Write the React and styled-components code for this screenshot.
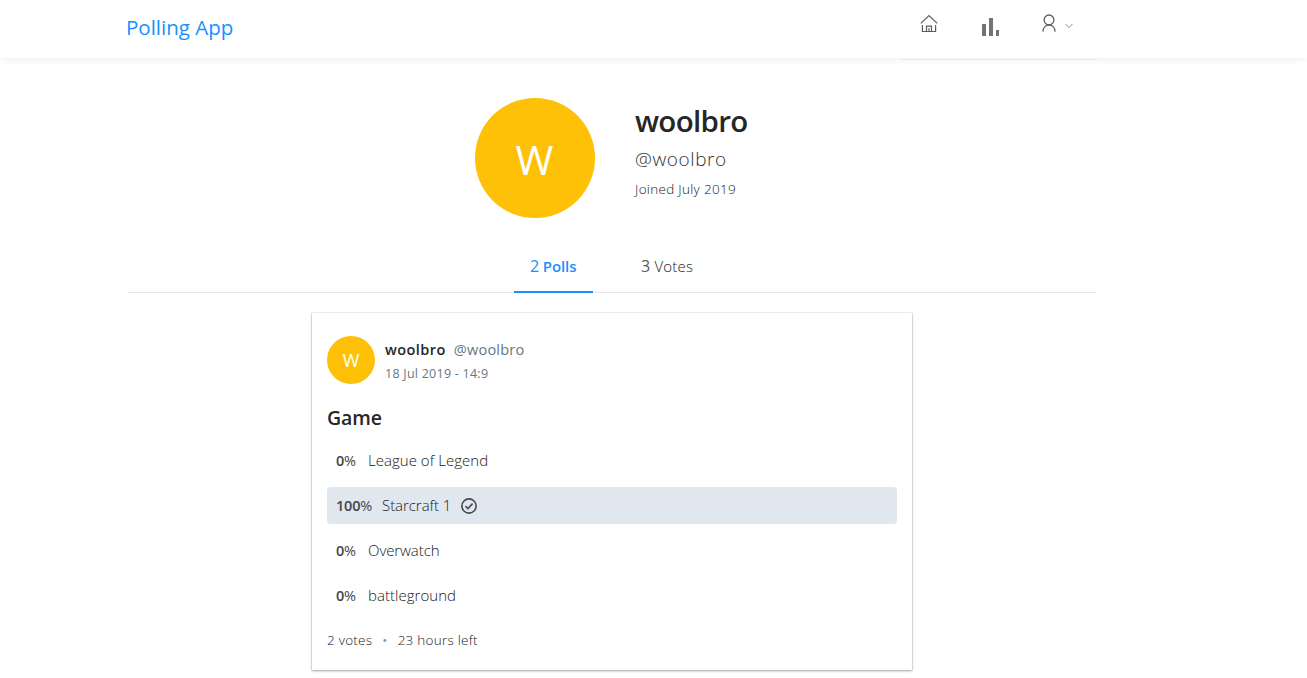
import React from "react";
import styled, { createGlobalStyle } from "styled-components";

const choices = [
  { text: "League of Legend", percent: 0, spacing: "0.03px" },
  { text: "Starcraft 1", percent: 100, selected: true, spacing: "-0.05px" },
  { text: "Overwatch", percent: 0, spacing: "-0.08px" },
  { text: "battleground", percent: 0, spacing: "0.04px" },
];

const HomeIcon = () => (
  <svg width="18" height="18" viewBox="0 0 18 18" fill="none" stroke="#5d5d5d" strokeWidth="1.2">
    <path d="M.8 8.4 9 .6 17.2 8.4" />
    <path d="M2.4 10v6.5h13.2V10" />
    <path d="M6.5 16.5v-5.4h5v5.4M9 13.3v3.2" />
  </svg>
);

const PollIcon = () => (
  <svg width="18" height="18" viewBox="0 0 18 18" fill="#737373">
    <path d="M0 6h4v12H0zM7 0h4v18H7zM14 12h3v6h-3z" />
  </svg>
);

const UserIcon = () => (
  <svg width="14" height="18" viewBox="0 0 14 18" fill="none" stroke="#5d5d5d" strokeWidth="1.3">
    <circle cx="7" cy="5.9" r="4.9" />
    <path d="M.9 17.6c.2-3.9 2.6-6.6 6.1-6.6s5.9 2.7 6.1 6.6" />
  </svg>
);

const DownIcon = () => (
  <svg width="8" height="6" viewBox="0 0 8 6" fill="none" stroke="#8c8c8c">
    <path d="M.4.8 4 4.6 7.6.8" />
  </svg>
);

const CheckIcon = () => (
  <svg width="16" height="16" viewBox="0 0 16 16" fill="none" stroke="#454a4f" strokeWidth="1.6">
    <circle cx="8" cy="8" r="7.1" />
    <path d="m4.5 8.2 2.4 2.3 4.7-4.9" />
  </svg>
);

const App = () => {
  return (
    <>
      <GlobalStyle />
      <Header>
        <HeaderInner>
          <Title>Polling App</Title>
          <Menu>
            <MenuItem $top={15}>
              <HomeIcon />
            </MenuItem>
            <MenuItem $top={18}>
              <PollIcon />
            </MenuItem>
            <MenuItem $top={14}>
              <UserIcon />
              <DownIcon />
            </MenuItem>
          </Menu>
        </HeaderInner>
      </Header>
      <Content>
        <Profile>
          <Avatar $size={120} $font={41}>
            W
          </Avatar>
          <Summary>
            <FullName>woolbro</FullName>
            <UserName>@woolbro</UserName>
            <Joined>Joined July 2019</Joined>
          </Summary>
        </Profile>
        <Tabs>
          <Tab $active>
            <Count $active>2</Count> Polls
          </Tab>
          <Tab>
            <Count>3</Count> Votes
          </Tab>
        </Tabs>
        <Card>
          <Creator>
            <Avatar $size={48} $font={18}>
              W
            </Avatar>
            <CreatorInfo>
              <CreatorLine>
                <CreatorName>woolbro</CreatorName>
                <CreatorUser>@woolbro</CreatorUser>
              </CreatorLine>
              <CreatedAt>18 Jul 2019 - 14:9</CreatedAt>
            </CreatorInfo>
          </Creator>
          <Question>Game</Question>
          <Choices>
            {choices.map((choice) => (
              <Choice key={choice.text} $selected={choice.selected}>
                <Percent $full={choice.selected}>
                  {choice.percent}
                  <Sign>%</Sign>
                </Percent>
                <ChoiceText $spacing={choice.spacing}>{choice.text}</ChoiceText>
                {choice.selected && <CheckIcon />}
              </Choice>
            ))}
          </Choices>
          <Footer>
            <span>2 votes</span>
            <Dot>•</Dot>
            <span>23 hours left</span>
          </Footer>
        </Card>
      </Content>
    </>
  );
};

const GlobalStyle = createGlobalStyle`
  * {
    box-sizing: border-box;
  }
  body {
    margin: 0;
    min-height: 678px;
    background: #fff;
    color: #595959;
    font-family: "Open Sans", "Noto Sans", sans-serif;
  }
  svg {
    display: block;
    flex: none;
  }
`;

const Header = styled.header`
  height: 58px;
  background: #fff;
  box-shadow: 0 2px 8px #f0f1f2;
`;

const HeaderInner = styled.div`
  width: 970px;
  margin-left: 127px;
  display: flex;
  justify-content: space-between;
`;

const Title = styled.div`
  margin-left: -1px;
  font-size: 20.5px;
  line-height: 54px;
  color: #1890ff;
`;

const Menu = styled.div`
  display: flex;
  width: 196px;
  height: 60px;
  padding-left: 19px;
  border-bottom: 1px solid #e8e8e8;
`;

const MenuItem = styled.div`
  display: flex;
  align-items: flex-start;
  padding-top: ${(p) => p.$top}px;
  margin-right: 44px;
  &:last-child {
    margin-left: -2px;
    margin-right: 0;
  }
  svg + svg {
    margin: 9px 0 0 9px;
  }
`;

const Content = styled.main`
  width: 970px;
  margin-left: 127px;
  padding-top: 40px;
`;

const Profile = styled.section`
  display: flex;
  padding-left: 348px;
`;

const Avatar = styled.div`
  display: flex;
  align-items: center;
  justify-content: center;
  flex: none;
  width: ${(p) => p.$size}px;
  height: ${(p) => p.$size}px;
  padding-top: ${(p) => (p.$size > 100 ? 1 : 0)}px;
  padding-right: ${(p) => (p.$size > 100 ? 1 : 0)}px;
  border-radius: 50%;
  background: #ffc107;
  color: #fff;
  font-size: ${(p) => p.$font}px;
`;

const Summary = styled.div`
  padding-left: 40px;
`;

const FullName = styled.div`
  font-size: 29.5px;
  font-weight: 600;
  line-height: 46px;
  letter-spacing: -0.7px;
  color: #262626;
`;

const UserName = styled.div`
  font-size: 19px;
  font-weight: 300;
  line-height: 30px;
  letter-spacing: 0.6px;
  color: #303030;
`;

const Joined = styled.div`
  font-size: 13.5px;
  font-weight: 300;
  line-height: 30px;
  letter-spacing: 0.3px;
  color: #202020;
`;

const Tabs = styled.nav`
  display: flex;
  height: 54px;
  margin-top: 21px;
  padding-left: 387px;
  border-bottom: 1px solid #e8e8e8;
`;

const Tab = styled.div`
  height: 54px;
  margin-right: 32px;
  padding: 0 16px;
  line-height: 54px;
  font-size: 15px;
  letter-spacing: ${(p) => (p.$active ? "-0.1px" : "0.2px")};
  white-space: nowrap;
  color: ${(p) => (p.$active ? "#1890ff" : "#202020")};
  font-weight: ${(p) => (p.$active ? 600 : 300)};
  width: ${(p) => (p.$active ? "79px" : "auto")};
  border-bottom: 2px solid ${(p) => (p.$active ? "#1890ff" : "transparent")};
`;

const Count = styled.span`
  font-size: 16px;
  font-weight: 400;
  color: ${(p) => (p.$active ? "#1890ff" : "#595959")};
`;

const Card = styled.article`
  width: 600px;
  height: 357px;
  margin: 20px 0 0 185px;
  padding: 23px 15px 0;
  background: #fff;
  box-shadow: 0 1px 3px rgba(0, 0, 0, 0.14), 0 0 0 1px rgba(0, 0, 0, 0.05),
    0 1px 2px rgba(0, 0, 0, 0.2);
`;

const Creator = styled.div`
  display: flex;
`;

const CreatorInfo = styled.div`
  padding-left: 10px;
`;

const CreatorLine = styled.div`
  display: flex;
  gap: 8px;
  padding-top: 1px;
  font-size: 14.5px;
  line-height: 25px;
`;

const CreatorName = styled.span`
  font-weight: 600;
  letter-spacing: 0.45px;
  color: #262626;
`;

const CreatorUser = styled.span`
  letter-spacing: 0.2px;
  color: #657786;
`;

const CreatedAt = styled.div`
  font-size: 12.5px;
  line-height: 23px;
  letter-spacing: 0.25px;
  color: #657786;
`;

const Question = styled.div`
  margin-top: 17px;
  font-size: 19.5px;
  font-weight: 600;
  line-height: 32px;
  letter-spacing: -0.1px;
  color: #262626;
`;

const Choices = styled.div`
  display: grid;
  gap: 8px;
  margin-top: 8px;
`;

const Choice = styled.div`
  display: flex;
  align-items: center;
  height: 37px;
  padding-left: 9px;
  border-radius: 4px;
  background: ${(p) => (p.$selected ? "#e0e7ee" : "transparent")};
`;

const Percent = styled.span`
  width: ${(p) => (p.$full ? 46 : 32)}px;
  font-size: 14.5px;
  font-weight: 600;
  letter-spacing: -0.2px;
  color: #454545;
`;

const Sign = styled.span`
  font-weight: 400;
`;

const ChoiceText = styled.span`
  margin-right: 10px;
  padding-bottom: 2px;
  font-size: 15px;
  font-weight: 300;
  letter-spacing: ${(p) => p.$spacing};
  color: #202020;
`;

const Footer = styled.div`
  display: flex;
  margin-top: 15px;
  font-size: 13.5px;
  font-weight: 300;
  line-height: 22px;
  letter-spacing: 0.25px;
  color: #202020;
`;

const Dot = styled.span`
  margin: 0 10px;
  font-weight: 400;
  color: #8899a6;
`;

export default App;
